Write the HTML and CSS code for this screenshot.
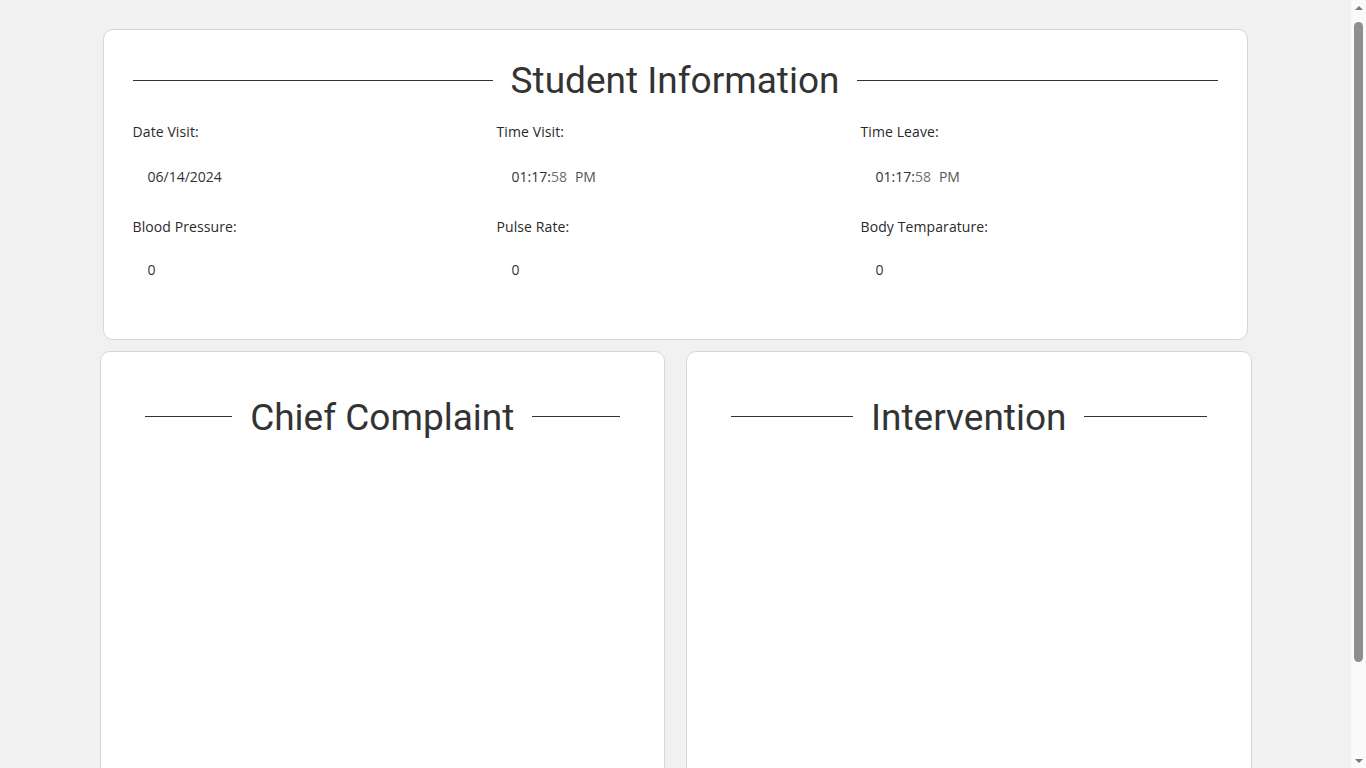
FILE: index.html
```html
<!DOCTYPE html>
<html>
<head>
<meta charset="utf-8">
<link rel="stylesheet" href="styles.css">
</head>
<body>
<div class="wrap">
  <section class="card info">
    <h2 class="heading"><span class="line"></span><span class="htext">Student Information</span><span class="line"></span></h2>
    <div class="fields">
      <div class="field"><div class="label">Date Visit:</div><div class="value">06/14/2024</div></div>
      <div class="field"><div class="label">Time Visit:</div><div class="value">01:17:<span class="dim">58</span><span class="ampm">PM</span></div></div>
      <div class="field"><div class="label">Time Leave:</div><div class="value">01:17:<span class="dim">58</span><span class="ampm">PM</span></div></div>
      <div class="field r2"><div class="label">Blood Pressure:</div><div class="value">0</div></div>
      <div class="field r2"><div class="label">Pulse Rate:</div><div class="value">0</div></div>
      <div class="field r2"><div class="label">Body Temparature:</div><div class="value">0</div></div>
    </div>
  </section>
  <div class="row">
    <section class="card half">
      <h2 class="heading"><span class="line"></span><span class="htext">Chief Complaint</span><span class="line"></span></h2>
    </section>
    <section class="card half">
      <h2 class="heading"><span class="line"></span><span class="htext">Intervention</span><span class="line"></span></h2>
    </section>
  </div>
</div>
<div class="scrollbar">
  <div class="arrow"><span class="tri-up"></span></div>
  <div class="track"><div class="thumb"></div></div>
  <div class="arrow"><span class="tri-down"></span></div>
</div>
</body>
</html>
```
FILE: styles.css
```css
html, body {
  margin: 0;
  padding: 0;
  background: #f0f1f0;
}
body {
  font-family: "Open Sans", "Noto Sans", sans-serif;
  color: #333;
  padding-right: 15px;
}
.wrap {
  width: 1152px;
  margin: 0 auto;
  padding: 29px 0 16px;
}
.card {
  background: #fff;
  border: 1px solid #d6d6d6;
  border-radius: 10px;
  box-sizing: border-box;
}
.info {
  margin: 0 4px 0 3px;
  height: 311px;
  padding: 29px 29px 0;
}
.heading {
  margin: 0;
  display: flex;
  align-items: center;
  gap: 18px;
  font-family: Roboto, "Noto Sans", sans-serif;
  font-weight: 400;
  font-size: 37px;
  line-height: 42px;
  color: #333;
}
.heading .htext {
  position: relative;
  top: 1px;
}
.half .heading .line {
  position: relative;
  top: -1px;
}
.heading .line {
  flex: 1;
  height: 1px;
  background: #333;
}
.fields {
  display: grid;
  grid-template-columns: 364px 364px 1fr;
  margin-top: 21px;
}
.label {
  font-size: 14px;
  letter-spacing: 0.1px;
  line-height: 20px;
  height: 20px;
  color: #2a2a2a;
}
.value {
  font-size: 14px;
  line-height: 20px;
  height: 20px;
  padding: 0 15px;
  margin-top: 25px;
  color: #333;
}
.r2 {
  margin-top: 30px;
}
.r2 .value {
  margin-top: 23px;
}
.dim { color: #6f6f6f; }
.ampm { color: #555; margin-left: 8px; }
.row {
  display: flex;
  gap: 21px;
  margin-top: 11px;
}
.half {
  flex: 1;
  height: 520px;
  padding: 44px 44px 0;
}
.scrollbar {
  position: fixed;
  top: 0;
  right: 0;
  width: 15px;
  height: 100vh;
  background: #fafafa;
  display: flex;
  flex-direction: column;
  z-index: 10;
}
.arrow {
  flex: none;
  width: 15px;
  height: 15px;
  display: flex;
  align-items: center;
  justify-content: center;
}
.tri-up {
  width: 0;
  height: 0;
  border-left: 4px solid transparent;
  border-right: 4px solid transparent;
  border-bottom: 4px solid #7a7a7a;
}
.tri-down {
  width: 0;
  height: 0;
  border-left: 4px solid transparent;
  border-right: 4px solid transparent;
  border-top: 4px solid #7a7a7a;
}
.track {
  flex: 1;
  padding: 7px 3px 91px;
}
.thumb {
  height: 100%;
  background: #8e8e8e;
  border-radius: 5px;
}
```
